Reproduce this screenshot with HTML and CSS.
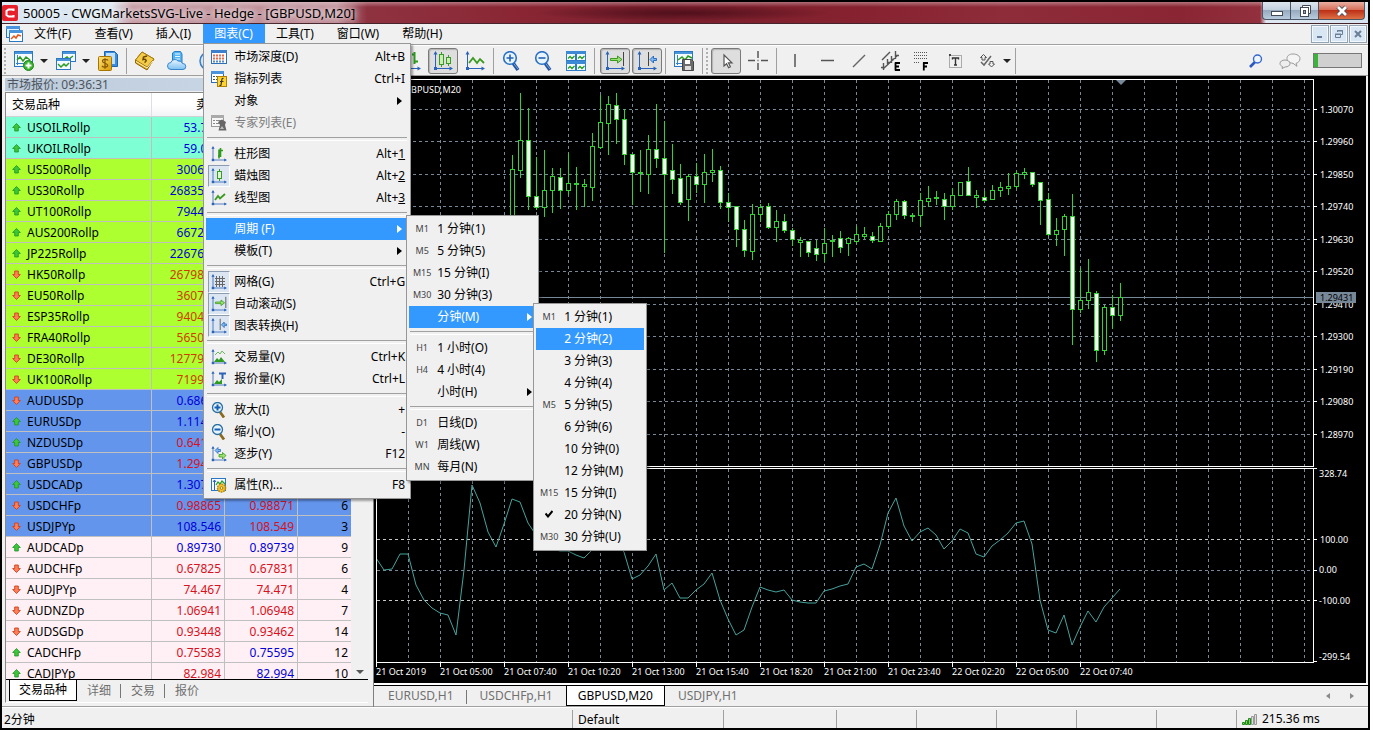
FILE: index.html
```html
<!DOCTYPE html>
<html lang="zh-CN">
<head>
<meta charset="utf-8">
<title>50005 - CWGMarketsSVG-Live - Hedge - [GBPUSD,M20]</title>
<link rel="stylesheet" href="styles.css">
</head>
<body>
<svg class="sprite" aria-hidden="true">
  <defs>
    <linearGradient id="gold" x1="0" y1="0" x2="1" y2="1"><stop offset="0" stop-color="#ffe680"/><stop offset="1" stop-color="#d99a00"/></linearGradient>
    <linearGradient id="sky" x1="0" y1="0" x2="0" y2="1"><stop offset="0" stop-color="#eaf6ff"/><stop offset="1" stop-color="#7cc0f0"/></linearGradient>
    <symbol id="axes" viewBox="0 0 20 20"><path d="M2.5 2v16M1 17.5h17" stroke="#2a63b8" fill="none"/><path d="M2.5 0l2 3.500h-4zM20 17.500l-3.500 -2v4z" fill="#2a63b8"/><path d="M1 16h3v3h-3z" fill="#2a63b8"/></symbol>
    <symbol id="up" viewBox="0 0 9 9"><path d="M4.500 .5L8.300 4.500H6.300V8H2.700V4.500H.7z" fill="#3ec63a" stroke="#1b9420" stroke-width=".8"/></symbol>
    <symbol id="down" viewBox="0 0 9 9"><path d="M4.500 8.500L8.300 4.500H6.300V1H2.700V4.500H.7z" fill="#ff8058" stroke="#d03e1a" stroke-width=".9"/></symbol>
    <symbol id="i-new" viewBox="0 0 20 20"><rect x=".5" y=".5" width="18" height="15" fill="#f4faff" stroke="#2c77c2"/><path d="M1 1h17v2H1z" fill="#4a94dc"/><path d="M3.500 4v10M2 12.500h15" stroke="#3b7fc9" fill="none"/><path d="M3 9l3-3 3 4 3-4 4 3" stroke="#2d9a20" fill="none" stroke-width="1.500"/><circle cx="14.500" cy="14.500" r="5" fill="#39b52f" stroke="#1c8418"/><path d="M14.500 11.500v6M11.500 14.500h6" stroke="#fff" stroke-width="2"/></symbol>
    <symbol id="i-profiles" viewBox="0 0 20 20"><rect x="6.500" y=".5" width="13" height="10" fill="#f4faff" stroke="#2c77c2"/><path d="M7 1h12v2H7z" fill="#4a94dc"/><path d="M8 8l3-2 2 2 4-3" stroke="#2d9a20" fill="none" stroke-width="1.500"/><rect x=".5" y="7.500" width="14" height="11" fill="#f4faff" stroke="#2c77c2"/><path d="M1 8h13v2H1z" fill="#4a94dc"/><path d="M2 13l3 3 3-3 2 2 3-3" stroke="#2d9a20" fill="none" stroke-width="1.500"/></symbol>
    <symbol id="i-dollar" viewBox="0 0 20 20"><path d="M6.500 .5h10l3 3v12h-13z" fill="#3a8ee0" stroke="#1d63b0"/><path d="M8 2h9v11H8z" fill="#bfe0ff"/><rect x=".5" y="5.500" width="13" height="14" rx="1" fill="url(#gold)" stroke="#a87400"/><path d="M10 9.500C9 8 4.500 8 4.500 10.300c0 2.400 5.200 1.500 5.200 4 0 2.300-4.700 2.200-5.700.5M7 7.300v10.500" stroke="#8a5a00" fill="none" stroke-width="1.300"/></symbol>
    <symbol id="i-book" viewBox="0 0 20 20"><path d="M7 1l12 7-7 11L.5 12V9z" fill="#d9a514" stroke="#8f6508"/><path d="M7 1l12 7-7 8L.5 9z" fill="#f3cc4a" stroke="#a67a10"/><path d="M1 10.500L12 17l6-7" stroke="#fff3c0" fill="none"/><path d="M12 5L8.500 6 8 8.500c3-1 4.500 1.500 1.500 3" stroke="#6d4700" fill="none" stroke-width="1.500"/></symbol>
    <symbol id="i-cloud" viewBox="0 0 20 20"><path d="M5.500 2l2-1.500h6L15 3v10H5.500z" fill="#55b5f2" stroke="#2a7cc4"/><path d="M8 3h5M8 5.500h5M8 8h5" stroke="#eaf7ff"/><path d="M4 18.500a3.500 3.500 0 010-7 4 4 0 017-1.500 4 4 0 014.500 2.500 3 3 0 01.5 6z" fill="url(#sky)" stroke="#3a86cc"/></symbol>
    <symbol id="i-globe" viewBox="0 0 20 20"><circle cx="10" cy="10" r="9" fill="#cbe6fb" stroke="#3a7fc6" stroke-width="1.500"/></symbol>
    <symbol id="i-bars" viewBox="0 0 20 20"><use href="#axes" width="20" height="20"/><path d="M7.500 5v10M6 12.500h2M13.500 1v12M11 3.500h3M13 10.500h4" stroke="#2c9a1c" stroke-width="2"/></symbol>
    <symbol id="i-candles" viewBox="0 0 20 20"><use href="#axes" width="20" height="20"/><path d="M8.500 1v15M15.500 4v11" stroke="#3a9a28"/><rect x="6.500" y="3.500" width="4" height="10" fill="#c8f0b0" stroke="#3a9a28"/><rect x="13.500" y="6.500" width="4" height="6" fill="#c8f0b0" stroke="#3a9a28"/></symbol>
    <symbol id="i-line" viewBox="0 0 20 20"><use href="#axes" width="20" height="20"/><path d="M4 12l4-5 4 5 3-4 4 4" fill="none" stroke="#3a9a20" stroke-width="1.800"/></symbol>
    <symbol id="i-zoomin" viewBox="0 0 20 20"><path d="M11 12l5 7" stroke="#24549e" stroke-width="3.500"/><path d="M12 13l4 5" stroke="#7aa6e0"/><circle cx="8" cy="7" r="6.300" fill="#e8f5ff" stroke="#2b6fc2" stroke-width="1.600"/><path d="M8 3.500v7M4.500 7h7" stroke="#2460b4" stroke-width="1.600"/></symbol>
    <symbol id="i-zoomout" viewBox="0 0 20 20"><path d="M11 12l5 7" stroke="#24549e" stroke-width="3.500"/><path d="M12 13l4 5" stroke="#7aa6e0"/><circle cx="8" cy="7" r="6.300" fill="#e8f5ff" stroke="#2b6fc2" stroke-width="1.600"/><path d="M4.500 7h7" stroke="#2460b4" stroke-width="1.600"/></symbol>
    <symbol id="tile" viewBox="0 0 10 10"><rect x=".5" y=".5" width="9" height="9" fill="#f2faff" stroke="#2f7cc8"/><path d="M0 0h10v3H0z" fill="#3c8ad6"/><path d="M2 7.500l2-2 2 2 2.500-2.500" fill="none" stroke="#2d9a20" stroke-width="1.300"/></symbol>
    <symbol id="i-tiles" viewBox="0 0 20 20"><use href="#tile" width="10" height="10"/><use href="#tile" x="10" width="10" height="10"/><use href="#tile" y="10" width="10" height="10"/><use href="#tile" x="10" y="10" width="10" height="10"/></symbol>
    <symbol id="i-scroll" viewBox="0 0 20 20"><use href="#axes" width="20" height="20"/><path d="M18.500 1v14" stroke="#444"/><path d="M5.500 7.500h7V5l4.500 3.500-4.500 3.500V9.500h-7z" fill="#9be070" stroke="#3a9a20"/></symbol>
    <symbol id="i-shift" viewBox="0 0 20 20"><use href="#axes" width="20" height="20"/><path d="M11.500 1v14" stroke="#444"/><path d="M19.500 7.500h-3V5l-3.500 3.500 3.500 3.500V9.500h3z" fill="#7db8f0" stroke="#2a6cc0"/></symbol>
    <symbol id="i-save" viewBox="0 0 20 20"><rect x=".5" y=".5" width="18" height="15" fill="#f4faff" stroke="#2c77c2"/><path d="M1 1h17v2H1z" fill="#4a94dc"/><path d="M3.500 4v10M2 12.500h6" stroke="#3b7fc9"/><path d="M4 9l4-3 3 3 3-4 4 2" stroke="#2d9a20" fill="none" stroke-width="1.500"/><path d="M8.500 8.500h9l2 2v9h-11z" fill="#6b6b6b" stroke="#444"/><path d="M11 9h5v4h-5z" fill="#fff"/><path d="M11 15h6v4h-6z" fill="#ddd"/></symbol>
    <symbol id="i-cursor" viewBox="0 0 20 20"><path d="M8 4v11l2.600-2.300 2 4 1.800-.9-2-4H16z" fill="#fff" stroke="#555" stroke-width="1.200"/></symbol>
    <symbol id="i-cross" viewBox="0 0 20 20"><path d="M10 0v7M10 12v7M0 9.500h7M13 9.500h7M9.500 9.500h1" stroke="#555" stroke-width="1.500"/></symbol>
    <symbol id="i-vline" viewBox="0 0 20 20"><path d="M10 3v13" stroke="#555" stroke-width="1.500"/></symbol>
    <symbol id="i-hline" viewBox="0 0 20 20"><path d="M4 9.500h13" stroke="#555" stroke-width="1.500"/></symbol>
    <symbol id="i-trend" viewBox="0 0 20 20"><path d="M4 16L16 4" stroke="#666" stroke-width="1.500"/></symbol>
    <symbol id="i-channel" viewBox="0 0 20 20"><path d="M1 9L9 1M2 18L17 4M2.500 19v-7M6.500 15V8M10.500 12V5M14.500 8V0M14 4.500h4M10 8.500h3M6 11.500h3M0 16.500h3" stroke="#555" stroke-width="1.400" fill="none"/><path d="M14 12h5M14 15.500h4M14 19h5M14.500 11.500v8" stroke="#000" stroke-width="1.800"/></symbol>
    <symbol id="i-fibo" viewBox="0 0 20 20"><path d="M1 1.500h13M1 4.500h13M1 7.500h13M1 11.500h6" stroke="#555" stroke-dasharray="1 1"/><path d="M10 12h5M10 15.500h4M10.800 11.500v8" stroke="#000" stroke-width="1.800"/></symbol>
    <symbol id="i-label" viewBox="0 0 20 20"><rect x="4.500" y="4.500" width="12" height="12" fill="none" stroke="#666" stroke-dasharray="1 1"/><path d="M4 3h2v2H4z" fill="#444"/><path d="M7.500 8.500V7h6v1.500M10.500 7v7.500M9 14h3" stroke="#333" stroke-width="1.400" fill="none"/></symbol>
    <symbol id="i-objects" viewBox="0 0 20 20"><path d="M6.500 3.500l3 3H8v2.500H5V6.500H3.500zM14.500 16l-3-3H13v-2.500h3V13h1.500z" fill="#eee" stroke="#555"/><path d="M4 11l3 3 7-9" fill="none" stroke="#666" stroke-width="1.500"/></symbol>
    <symbol id="i-find" viewBox="0 0 14 14"><path d="M1 13l5-5" stroke="#2b57c0" stroke-width="2.600"/><circle cx="8.500" cy="5" r="4" fill="#eef5ff" stroke="#3566cc" stroke-width="1.400"/></symbol>
    <symbol id="i-chat" viewBox="0 0 22 16"><path d="M14 1c4 0 7 2 7 4.500S19 10 17 10.300l1 3-4-3C10 10 8 8 8 5.500S10 1 14 1z" fill="#f4f4f4" stroke="#999"/><path d="M6 7c3 0 5 1.500 5 3.500S9 14 6 14l-3 1.500.5-2C2 13 1 12 1 10.500 1 8.500 3 7 6 7z" fill="#eee" stroke="#999"/></symbol>
    <symbol id="m-depth" viewBox="0 0 16 16"><rect x=".5" y="1.500" width="15" height="13" fill="#fff" stroke="#2f6fb8"/><path d="M0 1h16v3H0z" fill="#3c7fcc"/><path d="M2 6.500h12M2 9.500h12" stroke="#e06a50" stroke-width="2" stroke-dasharray="2 1"/><path d="M2 12.500h12" stroke="#5a88c8" stroke-width="2" stroke-dasharray="2 1"/></symbol>
    <symbol id="m-list" viewBox="0 0 16 16"><rect x=".5" y=".5" width="12" height="11" fill="#fff" stroke="#2f6fb8"/><path d="M0 0h13v3H0z" fill="#4a94dc"/><path d="M2 5.500h2M5 5.500h6M2 8.500h2M5 8.500h3" stroke="#456"/><rect x="6.500" y="5.500" width="9" height="10" fill="#ffd42e" stroke="#b08000"/><path d="M12.500 7.500c-2-1-1.500 1.500-2.500 6.500-.3.700-1 .6-1.500.2M9 10.500h3.500" stroke="#333" fill="none" stroke-width="1.200"/></symbol>
    <symbol id="m-expert" viewBox="0 0 16 16"><rect x=".5" y=".5" width="12" height="11" fill="#f6f6f6" stroke="#999"/><path d="M0 0h13v3H0z" fill="#aaa"/><path d="M2 5.500h2M5 5.500h6M2 8.500h2M5 8.500h3" stroke="#888"/><path d="M7 7l4-2.500L15 7l-1 3 1.500 5.500h-8L9 10z" fill="#666"/><path d="M9 14l2-3 2 3z" fill="#bbb"/></symbol>
    <symbol id="m-bars" viewBox="0 0 16 16"><use href="#axes" width="16" height="16"/><path d="M7 10h1.500M8 3.500v9M10 3h-1M9.500 2v9M9.500 4.500h2.500" stroke="#2c9a1c" stroke-width="1.600"/></symbol>
    <symbol id="m-candle" viewBox="0 0 16 16"><use href="#axes" width="16" height="16"/><path d="M8.500 1v12" stroke="#3a9a28"/><rect x="6.500" y="3.500" width="4" height="7" fill="#dff7d0" stroke="#3a9a28"/></symbol>
    <symbol id="m-line" viewBox="0 0 16 16"><use href="#axes" width="16" height="16"/><path d="M4 10l3-4 2 2.500L14 4" fill="none" stroke="#3a9a20" stroke-width="1.800"/></symbol>
    <symbol id="m-grid" viewBox="0 0 16 16"><use href="#axes" width="16" height="16"/><path d="M5.500 2v11M8.500 2v11M11.500 2v11M4 4.500h10M4 7.500h10M4 10.500h10" stroke="#666"/></symbol>
    <symbol id="m-volume" viewBox="0 0 16 16"><use href="#axes" width="16" height="16"/><path d="M3 13l3-4 2 2 2-3 4 5z" fill="#2d9a20"/><path d="M4 6l3-3 2 2 2-3 3 3" fill="none" stroke="#6ab860"/></symbol>
    <symbol id="m-ticks" viewBox="0 0 16 16"><use href="#axes" width="16" height="16"/><path d="M3 13l3-4 2 2 3-3v5z" fill="#2d9a20"/><path d="M8 2.500h7M11.500 2v6" stroke="#2a63b8" stroke-width="2"/></symbol>
    <symbol id="m-zoomin" viewBox="0 0 16 16"><path d="M9 10l4 5.500" stroke="#8a6a20" stroke-width="2.800"/><circle cx="6.500" cy="5.500" r="5" fill="#e8f5ff" stroke="#2b6fa2" stroke-width="1.300"/><path d="M6.500 2.500v6M3.500 5.500h6" stroke="#1460b4" stroke-width="2"/></symbol>
    <symbol id="m-zoomout" viewBox="0 0 16 16"><path d="M9 10l4 5.500" stroke="#8a6a20" stroke-width="2.800"/><circle cx="6.500" cy="5.500" r="5" fill="#e8f5ff" stroke="#2b6fa2" stroke-width="1.300"/><path d="M3.500 5.500h6" stroke="#1460b4" stroke-width="2"/></symbol>
    <symbol id="m-step" viewBox="0 0 16 16"><use href="#axes" width="16" height="16"/><path d="M4 4.500l3-3v2h2.500v2H7v2z" fill="#7db8f0" stroke="#2a6cc0" stroke-width=".8"/><path d="M15 9.500l-3.500-3v2H8v2.500h3.500v2z" fill="#9be070" stroke="#3a9a20" stroke-width=".8"/></symbol>
    <symbol id="m-props" viewBox="0 0 16 16"><rect x=".5" y="1.500" width="14" height="12" fill="#f4faff" stroke="#2c77c2"/><path d="M3.500 3v10M2 5l1.500-2L5 5" stroke="#2a63b8" fill="none"/><path d="M5 8l2-3 2 2 2-3 3 3" stroke="#2d9a20" fill="none" stroke-width="1.300"/><circle cx="10.500" cy="11" r="4" fill="#f4c430" stroke="#b88a10" stroke-width="1.500" stroke-dasharray="1.800 .8"/><circle cx="10.500" cy="11" r="1.400" fill="#fff0b0" stroke="#a87a08"/></symbol>
  </defs>
</svg>

<div class="window">
  <header class="titlebar">
    <svg class="logo" viewBox="0 0 16 16" aria-hidden="true"><rect width="16" height="16" rx="2" fill="#e8202c"/><path d="M11.500 6V4.500h-5L4.500 6v4l2 1.500h5V10" fill="none" stroke="#fff" stroke-width="2"/></svg>
    <h1 class="title">50005 - CWGMarketsSVG-Live - Hedge - [GBPUSD,M20]</h1>
    <div class="caption-buttons">
      <button class="cap cap-min" aria-label="最小化"><svg viewBox="0 0 14 12"><rect x="1.500" y="6.500" width="11" height="4" fill="#fff" stroke="#444b55"/></svg></button>
      <button class="cap cap-max" aria-label="还原"><svg viewBox="0 0 14 12"><path d="M4.500 .5h8v8h-2v-6h-6z" fill="#fff" stroke="#444b55"/><rect x="2.500" y="2.500" width="8" height="9" fill="#fff" stroke="#444b55"/><rect x="5.500" y="5.500" width="2" height="3" fill="#9ab" stroke="#444b55"/></svg></button>
      <button class="cap cap-close" aria-label="关闭"><svg viewBox="0 0 14 12"><path d="M3 2l8 8M11 2l-8 8" stroke="#444b55" stroke-width="4.500"/><path d="M3 2l8 8M11 2l-8 8" stroke="#fff" stroke-width="2.800"/></svg></button>
    </div>
  </header>

  <nav class="menubar">
    <svg class="doc-icon" viewBox="0 0 17 16" aria-hidden="true"><rect x=".5" y=".5" width="13" height="11" fill="#dff0ff" stroke="#2c77c2"/><path d="M0 0h14v3H0z" fill="#4a94dc"/><rect x="3.500" y="4.500" width="13" height="11" fill="#fff" stroke="#2c77c2"/><path d="M3 4h14v3H3z" fill="#4a94dc"/><path d="M5 13l3-3 2 2 2-3 3 1" stroke="#e05820" fill="none" stroke-width="1.500"/></svg>
    <button class="menu-title">文件(F)</button>
    <button class="menu-title">查看(V)</button>
    <button class="menu-title">插入(I)</button>
    <div class="menu-host">
      <button class="menu-title is-open" aria-expanded="true">图表(C)</button>
      <ul class="menu menu-charts">
        <li><button class="item"><svg class="mi"><use href="#m-depth"/></svg><span class="name">市场深度(D)</span><span class="key">Alt+B</span></button></li>
        <li><button class="item"><svg class="mi"><use href="#m-list"/></svg><span class="name">指标列表</span><span class="key">Ctrl+I</span></button></li>
        <li><button class="item"><span class="mi"></span><span class="name">对象</span><span class="arrow"></span></button></li>
        <li><button class="item" disabled><svg class="mi"><use href="#m-expert"/></svg><span class="name">专家列表(E)</span></button></li>
        <li class="sep"></li>
        <li><button class="item"><svg class="mi"><use href="#m-bars"/></svg><span class="name">柱形图</span><span class="key">Alt+<u>1</u></span></button></li>
        <li><button class="item"><svg class="mi is-checked"><use href="#m-candle"/></svg><span class="name">蜡烛图</span><span class="key">Alt+<u>2</u></span></button></li>
        <li><button class="item"><svg class="mi"><use href="#m-line"/></svg><span class="name">线型图</span><span class="key">Alt+<u>3</u></span></button></li>
        <li class="sep"></li>
        <li class="has-sub"><button class="item is-active"><span class="mi"></span><span class="name">周期 (F)</span><span class="arrow"></span></button>
          <ul class="menu menu-periods">
            <li><button class="item"><span class="tf">M1</span><span class="name">1 分钟(1)</span></button></li>
            <li><button class="item"><span class="tf">M5</span><span class="name">5 分钟(5)</span></button></li>
            <li><button class="item"><span class="tf">M15</span><span class="name">15 分钟(I)</span></button></li>
            <li><button class="item"><span class="tf">M30</span><span class="name">30 分钟(3)</span></button></li>
            <li class="has-sub"><button class="item is-active"><span class="tf"></span><span class="name">分钟(M)</span><span class="arrow"></span></button>
              <ul class="menu menu-minutes">
                <li><button class="item"><span class="tf">M1</span><span class="name">1 分钟(1)</span></button></li>
                <li><button class="item is-active"><span class="tf"></span><span class="name">2 分钟(2)</span></button></li>
                <li><button class="item"><span class="tf"></span><span class="name">3 分钟(3)</span></button></li>
                <li><button class="item"><span class="tf"></span><span class="name">4 分钟(4)</span></button></li>
                <li><button class="item"><span class="tf">M5</span><span class="name">5 分钟(5)</span></button></li>
                <li><button class="item"><span class="tf"></span><span class="name">6 分钟(6)</span></button></li>
                <li><button class="item"><span class="tf"></span><span class="name">10 分钟(0)</span></button></li>
                <li><button class="item"><span class="tf"></span><span class="name">12 分钟(M)</span></button></li>
                <li><button class="item"><span class="tf">M15</span><span class="name">15 分钟(I)</span></button></li>
                <li><button class="item"><span class="tf"><svg class="tick" viewBox="0 0 8 8"><path d="M.5 3.500L3 6.500 7.500 1" fill="none" stroke="#000" stroke-width="2"/></svg></span><span class="name">20 分钟(N)</span></button></li>
                <li><button class="item"><span class="tf">M30</span><span class="name">30 分钟(U)</span></button></li>
              </ul>
            </li>
            <li class="sep"></li>
            <li><button class="item"><span class="tf">H1</span><span class="name">1 小时(O)</span></button></li>
            <li><button class="item"><span class="tf">H4</span><span class="name">4 小时(4)</span></button></li>
            <li><button class="item"><span class="tf"></span><span class="name">小时(H)</span><span class="arrow"></span></button></li>
            <li class="sep"></li>
            <li><button class="item"><span class="tf">D1</span><span class="name">日线(D)</span></button></li>
            <li><button class="item"><span class="tf">W1</span><span class="name">周线(W)</span></button></li>
            <li><button class="item"><span class="tf">MN</span><span class="name">每月(N)</span></button></li>
          </ul>
        </li>
        <li><button class="item"><span class="mi"></span><span class="name">模板(T)</span><span class="arrow"></span></button></li>
        <li class="sep"></li>
        <li><button class="item"><svg class="mi is-checked"><use href="#m-grid"/></svg><span class="name">网格(G)</span><span class="key">Ctrl+G</span></button></li>
        <li><button class="item"><svg class="mi is-checked"><use href="#i-scroll"/></svg><span class="name">自动滚动(S)</span></button></li>
        <li><button class="item"><svg class="mi is-checked"><use href="#i-shift"/></svg><span class="name">图表转换(H)</span></button></li>
        <li class="sep"></li>
        <li><button class="item"><svg class="mi"><use href="#m-volume"/></svg><span class="name">交易量(V)</span><span class="key">Ctrl+K</span></button></li>
        <li><button class="item"><svg class="mi"><use href="#m-ticks"/></svg><span class="name">报价量(K)</span><span class="key">Ctrl+L</span></button></li>
        <li class="sep"></li>
        <li><button class="item"><svg class="mi"><use href="#m-zoomin"/></svg><span class="name">放大(I)</span><span class="key">+</span></button></li>
        <li><button class="item"><svg class="mi"><use href="#m-zoomout"/></svg><span class="name">缩小(O)</span><span class="key">-</span></button></li>
        <li><button class="item"><svg class="mi"><use href="#m-step"/></svg><span class="name">逐步(Y)</span><span class="key">F12</span></button></li>
        <li class="sep"></li>
        <li><button class="item"><svg class="mi"><use href="#m-props"/></svg><span class="name">属性(R)...</span><span class="key">F8</span></button></li>
      </ul>
    </div>
    <button class="menu-title">工具(T)</button>
    <button class="menu-title">窗口(W)</button>
    <button class="menu-title">帮助(H)</button>
    <div class="mdi-buttons">
      <button aria-label="最小化图表"><svg viewBox="0 0 10 10"><path d="M2 8h5" stroke="#6a7f96" stroke-width="2"/></svg></button>
      <button aria-label="还原图表"><svg viewBox="0 0 10 10"><path d="M3.500 3V1.500h5v4H7M3 2h6" stroke="#6a7f96" fill="none"/><path d="M1.500 5.500h5v3h-5zM1 5h6" stroke="#6a7f96" fill="none"/></svg></button>
      <button aria-label="关闭图表"><svg viewBox="0 0 10 10"><path d="M2 2l6 6M8 2l-6 6" stroke="#6a7f96" stroke-width="2"/></svg></button>
    </div>
  </nav>

  <div class="toolbar">
    <span class="grip"></span>
    <button class="tool" aria-label="新图表"><svg><use href="#i-new"/></svg></button><span class="caret"></span>
    <button class="tool" aria-label="图表模式"><svg><use href="#i-profiles"/></svg></button><span class="caret"></span>
    <button class="tool" aria-label="市场报价"><svg><use href="#i-dollar"/></svg></button>
    <span class="tsep"></span>
    <button class="tool" aria-label="MQL5"><svg><use href="#i-book"/></svg></button>
    <button class="tool" aria-label="云"><svg><use href="#i-cloud"/></svg></button>
    <button class="tool" aria-label="信号"><svg><use href="#i-globe"/></svg></button>
    <span class="covered"></span>
    <button class="tool" aria-label="柱形图"><svg><use href="#i-bars"/></svg></button>
    <button class="tool is-pressed" aria-label="蜡烛图"><svg><use href="#i-candles"/></svg></button>
    <button class="tool" aria-label="线型图"><svg><use href="#i-line"/></svg></button>
    <span class="tsep"></span>
    <button class="tool" aria-label="放大"><svg><use href="#i-zoomin"/></svg></button>
    <button class="tool" aria-label="缩小"><svg><use href="#i-zoomout"/></svg></button>
    <button class="tool" aria-label="平铺"><svg><use href="#i-tiles"/></svg></button>
    <span class="tsep tsep-wide"></span>
    <button class="tool is-pressed" aria-label="自动滚动"><svg><use href="#i-scroll"/></svg></button>
    <button class="tool is-pressed" aria-label="图表转换"><svg><use href="#i-shift"/></svg></button>
    <span class="tsep"></span>
    <button class="tool" aria-label="模板"><svg><use href="#i-save"/></svg></button>
    <span class="tsep"></span>
    <span class="grip"></span>
    <button class="tool is-pressed" aria-label="光标"><svg><use href="#i-cursor"/></svg></button>
    <button class="tool" aria-label="十字线"><svg><use href="#i-cross"/></svg></button>
    <span class="tsep"></span>
    <button class="tool" aria-label="垂直线"><svg><use href="#i-vline"/></svg></button>
    <button class="tool" aria-label="水平线"><svg><use href="#i-hline"/></svg></button>
    <button class="tool" aria-label="趋势线"><svg><use href="#i-trend"/></svg></button>
    <button class="tool" aria-label="等距通道"><svg><use href="#i-channel"/></svg></button>
    <button class="tool" aria-label="斐波那契"><svg><use href="#i-fibo"/></svg></button>
    <button class="tool" aria-label="文本标签"><svg><use href="#i-label"/></svg></button>
    <button class="tool" aria-label="箭头"><svg><use href="#i-objects"/></svg></button><span class="caret"></span>
    <span class="tsep"></span>
    <div class="toolbar-right">
      <button class="plain" aria-label="搜索"><svg class="find"><use href="#i-find"/></svg></button>
      <button class="plain" aria-label="聊天"><svg class="chat"><use href="#i-chat"/></svg></button>
      <div class="meter"><div class="meter-fill"></div></div>
    </div>
  </div>

  <main class="workspace">
    <section class="watch">
      <h2 class="watch-title">市场报价: 09:36:31</h2>
      <div class="watch-body">
        <div class="watch-list">
          <table class="quotes">
            <colgroup><col class="c-symbol"><col class="c-price"><col class="c-price"><col class="c-spread"></colgroup>
            <thead><tr><th>交易品种</th><th>卖价</th><th>买价</th><th>点差</th></tr></thead>
            <tbody>
              <tr class="aqua"><td><svg><use href="#up"/></svg>USOILRollp</td><td class="b">53.725</td><td class="b">53.765</td><td>40</td></tr>
              <tr class="aqua"><td><svg><use href="#up"/></svg>UKOILRollp</td><td class="b">59.025</td><td class="b">59.065</td><td>40</td></tr>
              <tr class="lime"><td><svg><use href="#up"/></svg>US500Rollp</td><td class="b">3006.10</td><td class="b">3006.60</td><td>50</td></tr>
              <tr class="lime"><td><svg><use href="#up"/></svg>US30Rollp</td><td class="b">26835.10</td><td class="b">26838.10</td><td>30</td></tr>
              <tr class="lime"><td><svg><use href="#up"/></svg>UT100Rollp</td><td class="b">7944.10</td><td class="b">7946.10</td><td>20</td></tr>
              <tr class="lime"><td><svg><use href="#up"/></svg>AUS200Rollp</td><td class="b">6672.10</td><td class="b">6674.10</td><td>20</td></tr>
              <tr class="lime"><td><svg><use href="#up"/></svg>JP225Rollp</td><td class="b">22676.00</td><td class="b">22686.00</td><td>10</td></tr>
              <tr class="lime"><td><svg><use href="#down"/></svg>HK50Rollp</td><td class="r">26798.00</td><td class="r">26808.00</td><td>10</td></tr>
              <tr class="lime"><td><svg><use href="#down"/></svg>EU50Rollp</td><td class="r">3607.10</td><td class="r">3609.10</td><td>20</td></tr>
              <tr class="lime"><td><svg><use href="#down"/></svg>ESP35Rollp</td><td class="r">9404.10</td><td class="r">9410.10</td><td>60</td></tr>
              <tr class="lime"><td><svg><use href="#down"/></svg>FRA40Rollp</td><td class="r">5650.10</td><td class="r">5652.10</td><td>20</td></tr>
              <tr class="lime"><td><svg><use href="#down"/></svg>DE30Rollp</td><td class="r">12779.10</td><td class="r">12781.10</td><td>20</td></tr>
              <tr class="lime"><td><svg><use href="#down"/></svg>UK100Rollp</td><td class="r">7199.10</td><td class="r">7201.10</td><td>20</td></tr>
              <tr class="blue"><td><svg><use href="#down"/></svg>AUDUSDp</td><td class="b">0.68640</td><td class="b">0.68645</td><td>5</td></tr>
              <tr class="blue"><td><svg><use href="#up"/></svg>EURUSDp</td><td class="b">1.11450</td><td class="b">1.11455</td><td>5</td></tr>
              <tr class="blue"><td><svg><use href="#up"/></svg>NZDUSDp</td><td class="r">0.64110</td><td class="r">0.64116</td><td>6</td></tr>
              <tr class="blue"><td><svg><use href="#down"/></svg>GBPUSDp</td><td class="r">1.29431</td><td class="r">1.29439</td><td>8</td></tr>
              <tr class="blue"><td><svg><use href="#up"/></svg>USDCADp</td><td class="b">1.30790</td><td class="b">1.30796</td><td>6</td></tr>
              <tr class="blue"><td><svg><use href="#down"/></svg>USDCHFp</td><td class="r">0.98865</td><td class="r">0.98871</td><td>6</td></tr>
              <tr class="blue"><td><svg><use href="#down"/></svg>USDJPYp</td><td class="b">108.546</td><td class="r">108.549</td><td>3</td></tr>
              <tr class="pink"><td><svg><use href="#up"/></svg>AUDCADp</td><td class="b">0.89730</td><td class="b">0.89739</td><td>9</td></tr>
              <tr class="pink"><td><svg><use href="#down"/></svg>AUDCHFp</td><td class="r">0.67825</td><td class="r">0.67831</td><td>6</td></tr>
              <tr class="pink"><td><svg><use href="#down"/></svg>AUDJPYp</td><td class="r">74.467</td><td class="r">74.471</td><td>4</td></tr>
              <tr class="pink"><td><svg><use href="#down"/></svg>AUDNZDp</td><td class="r">1.06941</td><td class="r">1.06948</td><td>7</td></tr>
              <tr class="pink"><td><svg><use href="#down"/></svg>AUDSGDp</td><td class="r">0.93448</td><td class="r">0.93462</td><td>14</td></tr>
              <tr class="pink"><td><svg><use href="#up"/></svg>CADCHFp</td><td class="r">0.75583</td><td class="b">0.75595</td><td>12</td></tr>
              <tr class="pink"><td><svg><use href="#up"/></svg>CADJPYp</td><td class="r">82.984</td><td class="b">82.994</td><td>10</td></tr>
            </tbody>
          </table>
          <div class="scroll"><span class="scroll-down"></span></div>
        </div>
        <div class="watch-tabs">
          <button class="wtab is-current">交易品种</button><button class="wtab">详细</button><button class="wtab">交易</button><button class="wtab">报价</button>
        </div>
      </div>
    </section>

    <section class="charts">
      <div class="chart">
        <div class="plots">
          <svg class="pane pane-price">
            <defs><pattern id="vgrid" width="32" height="6" patternUnits="userSpaceOnUse"><rect x="31" width="1" height="3" fill="#778899"/></pattern></defs>
            <rect width="100%" height="100%" fill="url(#vgrid)"/>
            <g class="grid">
              <line x2="100%" y1="29.500" y2="29.500"/><line x2="100%" y1="61.500" y2="61.500"/><line x2="100%" y1="94.500" y2="94.500"/><line x2="100%" y1="126.500" y2="126.500"/><line x2="100%" y1="159.500" y2="159.500"/><line x2="100%" y1="191.500" y2="191.500"/><line x2="100%" y1="224.500" y2="224.500"/><line x2="100%" y1="256.500" y2="256.500"/><line x2="100%" y1="289.500" y2="289.500"/><line x2="100%" y1="321.500" y2="321.500"/><line x2="100%" y1="354.500" y2="354.500"/>
            </g>
            <line class="bid-line" x2="100%" y1="217.500" y2="217.500"/>
            <path d="M739 0h10l-5 5z" fill="#778899"/>
            <g id="candles"></g>
            <text class="chart-text" x="84" y="13" text-anchor="end">GBPUSD,M20</text>
          </svg>
          <svg class="pane pane-osc">
            <rect width="100%" height="100%" fill="url(#vgrid)"/>
            <line class="level" x2="100%" y1="70.500" y2="70.500"/>
            <line class="zero" x2="100%" y1="101.500" y2="101.500"/>
            <line class="level" x2="100%" y1="131.500" y2="131.500"/>
            <polyline id="cci"/>
          </svg>
          <svg class="time-axis">
            <path d="M2.500 0v4M66.500 0v4M130.500 0v4M194.500 0v4M258.500 0v4M322.500 0v4M386.500 0v4M450.500 0v4M514.500 0v4M578.500 0v4M642.500 0v4M706.500 0v4" stroke="#fff"/>
            <g class="chart-text"><text x="2" y="12">21 Oct 2019</text><text x="66" y="12">21 Oct 05:00</text><text x="130" y="12">21 Oct 07:40</text><text x="194" y="12">21 Oct 10:20</text><text x="258" y="12">21 Oct 13:00</text><text x="322" y="12">21 Oct 15:40</text><text x="386" y="12">21 Oct 18:20</text><text x="450" y="12">21 Oct 21:00</text><text x="514" y="12">21 Oct 23:40</text><text x="578" y="12">22 Oct 02:20</text><text x="642" y="12">22 Oct 05:00</text><text x="706" y="12">22 Oct 07:40</text></g>
          </svg>
        </div>
        <svg class="price-axis">
          <path d="M0 32.500h3M0 64.500h3M0 97.500h3M0 129.500h3M0 162.500h3M0 194.500h3M0 227.500h3M0 259.500h3M0 292.500h3M0 324.500h3M0 357.500h3M0 391.500h3M0 462.500h3M0 493.500h3M0 523.500h3M0 584.500h3" stroke="#fff"/>
          <g class="chart-text"><text x="6" y="36">1.30070</text><text x="6" y="68">1.29960</text><text x="6" y="101">1.29850</text><text x="6" y="133">1.29740</text><text x="6" y="166">1.29630</text><text x="6" y="198">1.29520</text><text x="6" y="231">1.29410</text><text x="6" y="263">1.29300</text><text x="6" y="296">1.29190</text><text x="6" y="328">1.29080</text><text x="6" y="361">1.28970</text><text x="5" y="400">328.74</text><text x="6" y="466">100.00</text><text x="5" y="496">0.00</text><text x="5" y="527">-100.00</text><text x="5" y="583">-299.54</text></g>
          <rect x="2" y="215" width="40" height="11" fill="#778899"/>
          <text class="chart-text bid-text" x="6" y="224">1.29431</text>
        </svg>
      </div>
      <div class="chart-tabs">
        <button class="ctab">EURUSD,H1</button><button class="ctab">USDCHFp,H1</button><button class="ctab is-current">GBPUSD,M20</button><button class="ctab">USDJPY,H1</button>
        <div class="tab-arrows"><button class="plain" aria-label="向左"><svg viewBox="0 0 4 6"><path d="M4 0v6L0 3z" fill="#8a8a8a"/></svg></button><button class="plain" aria-label="向右"><svg viewBox="0 0 4 6"><path d="M0 0v6l4-3z" fill="#8a8a8a"/></svg></button></div>
      </div>
    </section>
  </main>

  <footer class="status">
    <span class="st st-hint">2分钟</span>
    <span class="st st-profile">Default</span>
    <span class="st st-open"></span><span class="st st-low"></span><span class="st st-low"></span><span class="st st-low"></span><span class="st st-low"></span><span class="st st-low"></span>
    <span class="st st-ping"><svg viewBox="0 0 15 11" aria-hidden="true"><path d="M.5 8.500h2v2h-2zM3.500 6.500h2v4h-2zM6.500 4.500h2v6h-2z" fill="#7ad860" stroke="#1f8a18"/><path d="M9.500 2.500h2v8h-2zM12.500 .5h2v10h-2z" fill="#ddd" stroke="#999"/></svg>215.36 ms</span>
  </footer>
</div>
<script src="chart.js"></script>
</body>
</html>
```

FILE: chart.js
```js
// Candles sit 8px apart. Each row is [high, body top, body bottom, low, kind] in
// thirds of a pixel below the run's base line; kind is h (hollow) or w (filled).
const STEP = 8;
const runs = [
  { x: 135, base: 0, rows: [
    [225,268,480,520,'h'],[39,181,270,293,'h'],[84,181,350,389,'w'],[233,348,383,387,'w'],[210,331,383,410,'h'],
    [264,289,332,396,'h'],[264,292,332,384,'w'],[220,310,332,342,'h'],[261,310,313,387,'h'],[297,313,320,378,'h'],
    [159,199,321,360,'h'],[45,127,201,204,'h'],[48,72,131,224,'h'],[39,76,119,189,'w'],[89,118,224,254,'w'],
    [222,222,278,372,'w'],[210,277,281,335,'h'],[165,208,282,339,'h'],[72,208,236,262,'w'],[123,235,282,516,'w'],
    [192,270,297,339,'w'],[252,294,366,372,'w'],[282,289,359,420,'h'],[250,289,314,338,'w'],[222,277,314,366,'h'],
    [207,270,277,305,'h'],[258,270,368,384,'w'],[339,367,383,423,'w'],[379,379,449,500,'w'],[420,448,512,530,'w'],
    [372,403,513,537,'h'],[372,381,404,425,'h'],[369,379,441,444,'w'],[390,424,441,483,'h'],[402,424,452,456,'w'],
    [445,451,479,497,'w'],[473,481,487,528,'h'],[483,484,518,528,'w'],[480,505,523,540,'w'],[444,490,521,545,'h'],
    [465,480,484,528,'h'],[453,475,503,516,'w'],[473,475,490,525,'h'],[438,463,485,491,'h'],[441,463,470,474,'h'],
    [457,468,482,486,'w'],[430,439,485,485,'h'],[395,403,440,446,'h'],[357,364,404,417,'h'] ] },
  { x: 527, base: 70, rows: [
    [150,154,197,206,'w'],[189,196,198,215,'h'],[129,151,197,228,'h'],[108,146,153,170,'h'],[123,142,146,162,'h'],
    [129,147,168,207,'w'],[114,136,168,179,'h'],[97,97,137,137,'h'],[51,94,137,137,'w'],[120,137,143,171,'h'],
    [124,141,152,155,'w'],[105,121,149,149,'h'],[96,112,122,138,'h'],[69,110,116,134,'h'],[63,69,110,116,'h'],
    [54,68,72,84,'h'],[66,67,104,108,'w'],[96,97,150,224,'w'],[130,148,254,255,'w'],[204,241,254,285,'h'],
    [193,199,239,315,'h'],[132,199,479,582,'w'],[354,451,479,488,'h'],[327,427,452,476,'h'],[424,430,600,633,'w'],
    [465,472,600,614,'h'],[436,472,497,534,'w'],[399,442,497,510,'h'] ] }
];
const NS = 'http://www.w3.org/2000/svg';
const candles = document.getElementById('candles');

function box(cls, x, y, w, h) {
  const r = document.createElementNS(NS, 'rect');
  r.setAttribute('class', cls);
  r.setAttribute('x', x);
  r.setAttribute('y', y);
  r.setAttribute('width', w);
  r.setAttribute('height', h);
  candles.appendChild(r);
}

runs.forEach(({ x, base, rows }) => {
  rows.forEach(([high, top, bottom, low, kind], i) => {
    const cx = x + i * STEP;
    const [hi, t, b, lo] = [high, top, bottom, low].map(v => base + Math.floor(v / 3));
    box('edge', cx, hi, 1, lo - hi + 1);
    box('edge', cx - 2, t, 5, b - t + 1);
    if (b - t > 1) box(kind === 'w' ? 'full' : 'hollow', cx - 1, t + 1, 3, b - t - 1);
  });
});

// Oscillator samples, same spacing, in thirds of a pixel.
const samples = [265,299,296,253,253,345,389,414,429,434,496,300,45,98,186,230,162,87,96,160,195,225,238,243,243,
  255,265,240,225,215,215,245,327,316,288,253,360,338,385,385,360,343,310,390,448,496,480,410,352,361,367,361,389,
  397,400,400,364,356,347,343,292,283,298,225,130,85,168,214,186,174,194,238,213,178,190,252,260,228,210,190,160,
  154,222,390,481,490,436,526,472,424,457,412,383,357];
document.getElementById('cci').setAttribute('points',
  samples.map((v, i) => `${i * STEP - 1},${Math.round(v / 3) + 1}`).join(' '));
```

FILE: styles.css
```css
* { box-sizing: border-box; }
html, body { margin: 0; height: 100%; }
body {
  background: #fff;
  padding-right: 3px;
  font: 12px/16px "Noto Sans", "Noto Sans CJK SC", sans-serif;
  color: #000;
  overflow: hidden;
}
button { font: inherit; color: inherit; background: none; border: 0; padding: 0; margin: 0; }
h1, h2 { font: inherit; margin: 0; }
ul { list-style: none; margin: 0; padding: 0; }
.sprite { position: absolute; width: 0; height: 0; }

.window { height: 100vh; display: flex; flex-direction: column; border: 2px solid #000; background: #f0f0f0; }

/* Title bar */
.titlebar {
  display: flex; align-items: center; height: 22px; flex: none;
  border-bottom: 1px solid #45252b;
  background:
    linear-gradient(rgba(255,255,255,.35), rgba(255,255,255,0) 5px),
    radial-gradient(ellipse 150px 8px at 680px 11px, rgba(60,10,20,.7), transparent),
    linear-gradient(90deg, #d5e6f3 0, #dce6ee 110px, #c69aa3 130px, #bd8c96 335px, #8f3240 365px, #8a2634 520px, #7a1e2c 650px, #86222f 850px, #8f2c3a 1000px, #8a2633 1180px, #93303d calc(100% - 108px), #dfe8f2 calc(100% - 102px), #d5e3f0 100%);
}
.logo { width: 16px; height: 16px; flex: none; }
.title { margin-left: 5px; font-size: 13px; text-shadow: 0 0 6px #fff, 0 0 6px rgba(255,255,255,.7); white-space: nowrap; }
.caption-buttons { margin-left: auto; margin-right: 3px; display: flex; align-self: flex-start; }
.cap {
  height: 18px; width: 28px; display: flex; align-items: center; justify-content: center;
  border: 1px solid #4a5666; border-top: 0; border-right-width: 0;
  background: linear-gradient(#dde6ef, #c3d0de 45%, #97aabf 50%, #b9cbdd);
}
.cap svg { width: 14px; height: 12px; }
.cap-min { border-radius: 0 0 0 4px; }
.cap-close { width: 47px; border-right-width: 1px; border-radius: 0 0 4px 0; background: linear-gradient(#e9b0a2, #d8705a 45%, #bd3118 50%, #dd7045); }

/* Menu bar */
.menubar { display: flex; height: 21px; flex: none; border-bottom: 1px solid #a0a0a0; padding-left: 4px; }
.doc-icon { width: 17px; height: 16px; margin-top: 2px; flex: none; }
.menu-title { height: 20px; padding: 0 12px 0 11px; white-space: nowrap; }
.menu-title.is-open { background: #3399ff; color: #fff; }
.menu-host { position: relative; }
.mdi-buttons { margin-left: auto; display: flex; gap: 1px; padding: 1px 1px 0 0; }
.mdi-buttons button { width: 18px; height: 18px; border: 1px solid #94a3b4; background: #d9e7f5; box-shadow: inset 0 0 0 1px #f2f8fd; display: grid; place-items: center; }
.mdi-buttons svg { width: 10px; height: 10px; }

/* Drop-down menus */
.menu { position: absolute; z-index: 5; background: #f0f0f0; border: 1px solid #979797; padding: 2px; box-shadow: 2px 2px 2px rgba(0,0,0,.35); }
.menu-charts { left: 0; top: 19px; width: 208px; }
.menu-periods { left: 200px; top: -3px; width: 133px; }
.menu-minutes { left: 124px; top: -3px; width: 114px; }
.has-sub { position: relative; }
.item { display: flex; align-items: center; width: 100%; height: 22px; text-align: left; white-space: nowrap; padding-right: 3px; }
.item.is-active { background: #3399ff; color: #fff; }
.item:disabled { color: #7c7c7c; }
.sep { height: 9px; padding-top: 3px; }
.sep::before { content: ""; display: block; height: 2px; margin: 0 1px; border-top: 1px solid #a0a0a0; border-bottom: 1px solid #fff; }
.mi { width: 22px; height: 22px; flex: none; padding: 3px; margin: 0 4px 0 2px; border: 0 solid #8d9bb0; }
.mi.is-checked { background: #dbe6f2; border-width: 1px; padding: 2px; border-right-color: #fff; border-bottom-color: #fff; }
.name { flex: 1; }
.arrow { border: 4px solid transparent; border-left: 5px solid currentColor; border-right: 0; margin-right: 1px; }
.menu-charts > li > .item > .arrow { margin-right: 3px; }
.tf { width: 28px; flex: none; text-align: center; color: #444; font-size: 9px; line-height: 12px; padding-right: 2px; }
.tick { width: 8px; height: 8px; }

/* Toolbar */
.toolbar { display: flex; align-items: center; height: 31px; flex: none; border-bottom: 1px solid #a0a0a0; border-top: 1px solid #fff; padding-left: 1px; }
.grip { width: 5px; height: 26px; flex: none; background: repeating-linear-gradient(#b0b0b0 0 2px, transparent 2px 4px) 1px 0 / 2px 100% no-repeat; }
.tool { width: 30px; height: 26px; margin: 0 1px; display: grid; place-items: center; flex: none; border-radius: 3px; }
.tool svg { width: 20px; height: 20px; }
.tool.is-pressed { border: 1px solid #7a7a7a; background: #dedede; box-shadow: inset 1px 1px 1px rgba(0,0,0,.2); }
.caret { width: 8px; margin-right: 2px; border: 4px solid transparent; border-top-color: #222; border-bottom: 0; flex: none; }
.tsep { width: 5px; height: 26px; flex: none; background: linear-gradient(#a0a0a0, #a0a0a0) 2px 0 / 1px 100% no-repeat; }
.tsep-wide { width: 7px; }
.covered { width: 170px; flex: none; }
.toolbar-right { margin-left: auto; display: flex; align-items: center; gap: 16px; padding-right: 6px; }
.toolbar-right .find { margin-right: 0; }
.plain { display: grid; place-items: center; }
.find { width: 14px; height: 14px; }
.chat { width: 22px; height: 16px; }
.toolbar-right .plain + .meter { margin-left: -4px; }
.meter { width: 49px; height: 15px; border: 1px solid #777; background: #d0d0d0; }
.meter-fill { width: 4px; height: 100%; background: #3cb43c; }

/* Market watch */
.workspace { display: flex; flex: 1; min-height: 0; }
.watch { width: 371px; flex: none; display: flex; flex-direction: column; padding: 2px 5px 3px 3px; border-bottom: 1px solid #a0a0a0; }
.watch-title { height: 13px; line-height: 13px; padding-left: 2px; margin-bottom: 1px; color: #4d545c; background: linear-gradient(90deg, #bccbdb, #cfdcea); }
.watch-body { flex: 1; min-height: 0; display: flex; flex-direction: column; border-top: 1px solid #888; border-left: 1px solid #888; border-bottom: 1px solid #fff; }
.watch-list { flex: 1; min-height: 0; display: flex; overflow: hidden; border-bottom: 1px solid #000; }
.quotes { width: 345px; table-layout: fixed; border-collapse: separate; border-spacing: 0; align-self: flex-start; flex: none; }
.c-symbol { width: 146px; }
.c-price { width: 73px; }
.c-spread { width: 53px; }
.quotes th { height: 24px; padding: 0 4px 0 6px; font-weight: 400; text-align: right; background: linear-gradient(#fff 50%, #f2f3f5); border-right: 1px solid #dcdfe4; border-bottom: 1px solid #cfd3d8; }
.quotes th:first-child { text-align: left; }
.quotes td { height: 21px; padding: 2px 3px 0; text-align: right; line-height: 16px; border-right: 1px solid #c0c0c0; border-bottom: 1px solid #c0c0c0; }
.quotes td:first-child { text-align: left; padding-left: 6px; }
.quotes td:last-child { border-right: 0; }
.quotes td svg { width: 9px; height: 9px; margin-right: 6px; }
.aqua { background: #7fffd4; }
.lime { background: #adff2f; }
.blue { background: #6495ed; }
.pink { background: #fff0f5; }
.b { color: #0000d8; }
.r { color: #d81020; }
.lime .r { color: #d03c00; }
.scroll { flex: 1; display: flex; align-items: flex-end; justify-content: center; padding-bottom: 5px; }
.scroll-down { border: 4px solid transparent; border-top-color: #555; border-bottom: 0; }
.watch-tabs { display: flex; height: 22px; flex: none; padding-left: 3px; }
.wtab { height: 21px; padding: 0 10px; color: #707070; background: linear-gradient(#777, #777) 100% 4px / 1px 14px no-repeat; }
.wtab:last-child { background: none; }
.wtab.is-current { color: #000; background: #fff; border: 1px solid #000; border-top: 0; padding: 0 9px; }

/* Charts */
.charts { flex: 1; min-width: 0; display: flex; flex-direction: column; border-left: 1px solid #808080; padding-right: 2px; }
.chart { flex: 1; min-height: 0; display: flex; background: #000; padding-top: 1px; }
.plots { flex: 1; min-width: 0; padding-top: 2px; }
.pane { display: block; width: calc(100% - 2px); margin-left: 2px; border: 1px solid #fff; overflow: hidden; }
.pane-price { height: 388px; margin-bottom: 1px; }
.pane-osc { height: 195px; }
.time-axis { display: block; width: 100%; height: 20px; }
.price-axis { width: 52px; height: 100%; flex: none; }
.grid line, .zero { stroke: #778899; stroke-dasharray: 3 3; }
.level { stroke: #c8c8c8; stroke-dasharray: 3 3; }
.bid-line { stroke: #778899; }
.edge { fill: #32d232; }
.full { fill: #f2fff0; }
.hollow { fill: #000; }
#cci { fill: none; stroke: #46a39d; stroke-width: 1; }
.chart-text { fill: #fff; font: 9px "Noto Sans", sans-serif; }
.bid-text { fill: #000; }
.chart-tabs { display: flex; height: 24px; flex: none; border-top: 2px solid #fff; box-shadow: inset 0 1px #000; border-bottom: 1px solid #a0a0a0; margin-right: -2px; }
.ctab { height: 21px; padding: 0 13px; color: #707070; background: linear-gradient(#777, #777) 100% 5px / 1px 14px no-repeat; }
.ctab:first-child { padding-left: 14px; }
.ctab:nth-child(2), .ctab:nth-child(4) { background: none; }
.ctab.is-current { color: #000; background: #fff; border: 1px solid #000; padding: 0 11px; }
.tab-arrows { margin-left: auto; display: flex; gap: 20px; padding-right: 14px; }
.tab-arrows svg { width: 4px; height: 6px; }

/* Status bar */
.status { display: flex; height: 21px; flex: none; border-top: 1px solid #fff; padding: 2px 0; }
.st { border-left: 1px solid #a0a0a0; padding-left: 5px; height: 18px; line-height: 20px; }
.st-hint { width: 570px; border-left: 0; padding-left: 2px; }
.st-profile { width: 151px; }
.st-open { width: 113px; }
.st-low { width: 80px; }
.st-ping { flex: 1; display: flex; align-items: center; gap: 5px; white-space: nowrap; }
.st-ping svg { width: 15px; height: 11px; }
```
